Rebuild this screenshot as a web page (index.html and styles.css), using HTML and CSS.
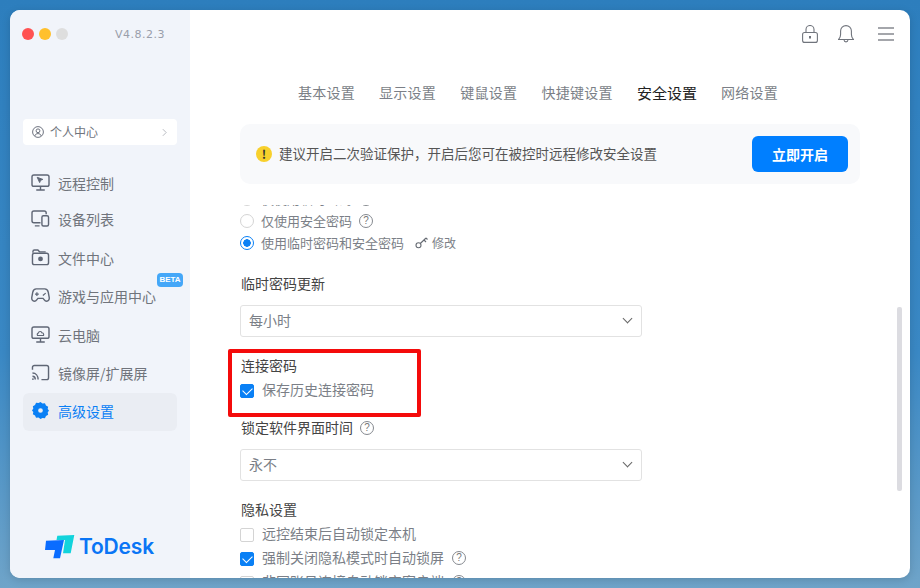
FILE: index.html
```html
<!DOCTYPE html>
<html lang="zh-CN">
<head>
    <meta charset="UTF-8">
    <meta name="viewport" content="width=device-width, initial-scale=1.0">
    <title>ToDesk 高级设置</title>
    <link rel="stylesheet" href="styles.css">
</head>
<body>
    <div class="window">
        <aside class="sidebar">
            <div class="title-row">
                <span class="light light-red"></span>
                <span class="light light-yellow"></span>
                <span class="light light-grey"></span>
                <span class="version">V4.8.2.3</span>
            </div>

            <a class="profile">
                <svg class="profile-icon" viewBox="0 0 12 12" fill="none" stroke="#6f7480" stroke-width="1">
                    <circle cx="6" cy="6" r="5.4"/>
                    <circle cx="6" cy="4.8" r="1.9"/>
                    <path d="M2.8 10c.4-1.7 1.6-2.4 3.2-2.4s2.8.7 3.2 2.4"/>
                </svg>
                <span class="profile-text">个人中心</span>
                <svg class="profile-arrow" viewBox="0 0 6 10" fill="none" stroke="#a9adb5" stroke-width="1">
                    <path d="M1 1l4 4-4 4"/>
                </svg>
            </a>

            <nav class="nav">
                <a class="nav-item">
                    <svg class="nav-icon" viewBox="0 0 20 18" fill="none" stroke="#5f6675" stroke-width="1.5">
                        <rect x="1" y="1" width="18" height="12" rx="2"/>
                        <path d="M10 13v4M5.500 17h9"/>
                        <path d="M6.500 3.500l6 2.200-2.400 1-1 2.400z" fill="#5f6675" stroke-width="1"/>
                    </svg>
                    远程控制
                </a>
                <a class="nav-item nav-item-second">
                    <svg class="nav-icon" viewBox="0 0 20 18" fill="none" stroke="#5f6675" stroke-width="1.5">
                        <path d="M10 13.500H3a2 2 0 0 1-2-2V3a2 2 0 0 1 2-2h11a2 2 0 0 1 2 2v1.500"/>
                        <rect x="11.500" y="6" width="7" height="11" rx="1.600"/>
                        <path d="M4 16.800h5"/>
                    </svg>
                    设备列表
                </a>
                <a class="nav-item">
                    <svg class="nav-icon" viewBox="0 0 20 18" fill="none" stroke="#5f6675" stroke-width="1.5">
                        <path d="M2 4V2.600C2 1.700 2.700 1 3.600 1h3.600l1.800 2h6.500"/>
                        <rect x="1.500" y="4.500" width="17" height="12" rx="2"/>
                        <circle cx="10" cy="10.500" r="1.800" fill="#5f6675"/>
                    </svg>
                    文件中心
                </a>
                <a class="nav-item nav-item-tall">
                    <svg class="nav-icon" viewBox="0 0 20 18" fill="none" stroke="#5f6675" stroke-width="1.500">
                        <path d="M5.500 2h9c2 0 3.200 1.300 3.700 3.400l1 5.600c.4 2.300-.9 4-2.700 4-1.200 0-2-.7-2.700-1.700L12.700 12H7.300l-1.100 1.300C5.500 14.300 4.700 15 3.500 15 1.700 15 .4 13.300.8 11l1-5.600C2.300 3.300 3.500 2 5.500 2z"/>
                        <path d="M6.200 5.500v4M4.200 7.500h4M12.500 9l3-2.500" stroke-width="1.300"/>
                    </svg>
                    游戏与应用中心
                    <span class="beta">BETA</span>
                </a>
                <a class="nav-item">
                    <svg class="nav-icon" viewBox="0 0 20 18" fill="none" stroke="#5f6675" stroke-width="1.5">
                        <rect x="1" y="1" width="18" height="12" rx="2"/>
                        <path d="M10 13v4M5.500 17h9"/>
                        <path d="M6.800 10h6.400c.6-1.700-.5-2.900-1.700-2.800-.3-1.900-3.500-2-3.700.2-1 0-1.600 1.300-1 2.600z" stroke-width="1.200"/>
                    </svg>
                    云电脑
                </a>
                <a class="nav-item">
                    <svg class="nav-icon" viewBox="0 0 20 18" fill="none" stroke="#5f6675" stroke-width="1.5">
                        <path d="M1.500 6V3.500a2 2 0 0 1 2-2h13a2 2 0 0 1 2 2v11a2 2 0 0 1-2 2H11"/>
                        <path d="M1.500 9.500c3.500 0 6 3 6 7M1.500 13c1.800 0 3 1.600 3 3.500"/>
                        <circle cx="2" cy="16" r="1" fill="#5f6675" stroke="none"/>
                    </svg>
                    镜像屏/扩展屏
                </a>
                <a class="nav-item nav-item-active">
                    <svg class="nav-icon" viewBox="0 0 20 18">
                        <path fill="#0a80f5" fill-rule="evenodd" d="M10 0l2.100 1.500 2.600-.2 1.100 2.400 2.300 1.200-.5 2.500L19 9l-1.400 2.100.5 2.500-2.300 1.200-1.100 2.400-2.600-.2L10 18l-2.100-1.500-2.600.2-1.100-2.400-2.300-1.200.5-2.500L1 9l1.400-2.100-.5-2.500 2.300-1.200 1.100-2.400 2.600.2zM10 6.500a2.500 2.500 0 1 0 0 5 2.500 2.500 0 0 0 0-5z"/>
                    </svg>
                    高级设置
                </a>
            </nav>

            <div class="brand">
                <svg class="brand-mark" viewBox="0 0 30 24">
                    <path fill="#12d3dc" d="M12.300 .7L29.300 0L25.700 18.300H18L20 5H11.500z"/>
                    <path fill="#0a6cff" d="M1 5.700L19 5L15 23.300H8.300L10 15H0z"/>
                </svg>
                <span class="brand-name">ToDesk</span>
            </div>
        </aside>

        <main class="main">
            <div class="topbar">
                <svg class="top-icon" viewBox="0 0 16 18" fill="none" stroke="#70747c" stroke-width="1.100">
                    <rect x=".6" y="7.500" width="14.800" height="9.900" rx="2"/>
                    <path d="M4 7.500V4.500a4 4 0 0 1 8 0v3"/>
                    <path d="M8 11v2.500" stroke-width="2"/>
                </svg>
                <svg class="top-icon" viewBox="0 0 16 18" fill="none" stroke="#70747c" stroke-width="1.100">
                    <path d="M.6 14.500h14.800c-1.500-1.400-2-2.900-2-5.200V6a5.400 5.400 0 0 0-10.800 0v3.300c0 2.300-.5 3.800-2 5.200z"/>
                    <path d="M6 14.800c.2 2.700 3.800 2.700 4 0"/>
                </svg>
                <div class="menu-icon"><span></span><span></span><span></span></div>
            </div>

            <div class="tabs">
                <a class="tab">基本设置</a>
                <a class="tab">显示设置</a>
                <a class="tab">键鼠设置</a>
                <a class="tab">快捷键设置</a>
                <a class="tab tab-active">安全设置</a>
                <a class="tab">网络设置</a>
            </div>

            <div class="banner">
                <span class="warn">!</span>
                <span class="banner-text">建议开启二次验证保护，开启后您可在被控时远程修改安全设置</span>
                <button class="banner-button">立即开启</button>
            </div>

            <div class="scroll">
                <div class="scroll-inner">
                    <div class="option">
                        <span class="radio"></span>仅使用临时密码<span class="help">?</span>
                    </div>
                    <div class="option">
                        <span class="radio"></span>仅使用安全密码<span class="help">?</span>
                    </div>
                    <div class="option">
                        <span class="radio radio-on"></span>使用临时密码和安全密码
                        <span class="edit">
                            <svg class="key-icon" viewBox="0 0 14 12" fill="none" stroke="#666b73" stroke-width="1.100">
                                <circle cx="3.500" cy="8.300" r="2.500"/>
                                <path d="M5.300 6.500L11 1M9 3l2 2M11 1l1.500 1.500"/>
                            </svg>
                            修改
                        </span>
                    </div>

                    <h3 class="label label-update">临时密码更新</h3>
                    <div class="select">每小时<span class="chevron"></span></div>

                    <div class="marked">
                        <h3 class="label label-tight">连接密码</h3>
                        <div class="option option-check">
                            <span class="check check-on"></span>保存历史连接密码
                        </div>
                        <div class="red-box"></div>
                    </div>

                    <h3 class="label label-lock">锁定软件界面时间<span class="help">?</span></h3>
                    <div class="select">永不<span class="chevron"></span></div>

                    <h3 class="label label-privacy label-tight">隐私设置</h3>
                    <div class="option option-check">
                        <span class="check"></span>远控结束后自动锁定本机
                    </div>
                    <div class="option option-check">
                        <span class="check check-on"></span>强制关闭隐私模式时自动锁屏<span class="help">?</span>
                    </div>
                    <div class="option option-check">
                        <span class="check"></span>非同账号连接自动锁定客户端<span class="help">?</span>
                    </div>
                </div>
                <div class="scrollbar"></div>
            </div>
        </main>
    </div>
</body>
</html>
```

FILE: styles.css
```css
* {
    box-sizing: border-box;
}
html, body {
    height: 100%;
}
body {
    margin: 0;
    padding: 10px;
    overflow: hidden;
    font-family: "Noto Sans CJK SC", "Noto Sans", sans-serif;
    font-size: 14px;
    color: #666;
    background: linear-gradient(180deg, #2d7ebd 0%, #3a88c4 60%, #6fa4c9 100%);
}
.window {
    display: flex;
    height: 568px;
    border-radius: 10px;
    overflow: hidden;
    background-color: #fff;
    box-shadow: 0 2px 8px rgba(0, 0, 0, 0.15);
}

/* Sidebar */
.sidebar {
    display: flex;
    flex-direction: column;
    flex: 0 0 180px;
    padding: 0 13px;
    background-color: #f1f4fa;
}
.title-row {
    display: flex;
    align-items: center;
    gap: 5px;
    height: 48px;
}
.light {
    width: 12px;
    height: 12px;
    border-radius: 50%;
}
.light-red {
    margin-left: -1px;
    background-color: #ff5252;
}
.light-yellow {
    background-color: #ffc02c;
}
.light-grey {
    background-color: #dedede;
}
.version {
    margin-left: 42px;
    font-family: "DejaVu Sans", sans-serif;
    font-size: 11px;
    letter-spacing: 0.5px;
    color: #9a9eaa;
}
.profile {
    display: flex;
    align-items: center;
    height: 26px;
    margin-top: 61px;
    padding: 0 10px 2px 9px;
    border-radius: 4px;
    background-color: #fff;
}
.profile-icon {
    width: 12px;
    height: 12px;
    margin: 2px 6px 0 0;
}
.profile-text {
    flex: 1;
    font-size: 12px;
    color: #70747c;
}
.profile-arrow {
    width: 5px;
    height: 9px;
    margin-top: 2px;
}
.nav {
    display: flex;
    flex-direction: column;
    margin-top: 20px;
}
.nav-item {
    position: relative;
    display: flex;
    align-items: center;
    height: 38px;
    padding: 0 0 2px 8px;
    border-radius: 6px;
    color: #70747c;
}
.nav-item-second {
    height: 37px;
    padding-bottom: 5px;
}
.nav-item-tall {
    height: 39px;
    padding-bottom: 3px;
}
.nav-item-active {
    background-color: #eaedf3;
    color: #0a80f5;
}
.nav-icon {
    flex: none;
    width: 19px;
    height: 17px;
    margin: 0 8px 1px 0;
}
.beta {
    position: absolute;
    top: -5px;
    right: -6px;
    width: 26px;
    border-radius: 4px;
    font-family: "Liberation Sans", sans-serif;
    font-size: 8px;
    font-weight: 700;
    line-height: 14px;
    text-align: center;
    color: #fff;
    background-color: #45a7f8;
}
.brand {
    display: flex;
    align-items: center;
    margin-top: auto;
    margin-bottom: 19px;
    padding-left: 22px;
}
.brand-mark {
    width: 30px;
    height: 24px;
    margin-right: 4px;
}
.brand-name {
    font-family: Inter, "Noto Sans", sans-serif;
    font-size: 21px;
    font-weight: 600;
    letter-spacing: -0.2px;
    color: #0a75f5;
}

/* Main column */
.main {
    display: flex;
    flex-direction: column;
    flex: 1;
    min-width: 0;
}
.topbar {
    display: flex;
    align-items: center;
    justify-content: flex-end;
    gap: 20px;
    height: 48px;
    padding-right: 16px;
}
.top-icon {
    width: 16px;
    height: 18px;
}
.menu-icon {
    display: flex;
    flex-direction: column;
    gap: 4px;
    width: 16px;
    margin-left: 4px;
}
.menu-icon span {
    height: 2px;
    background-color: #a4a6ab;
}
.tabs {
    display: flex;
    align-items: center;
    justify-content: center;
    gap: 24.2px;
    height: 22px;
    margin-top: 23px;
    padding-right: 24px;
}
.tab {
    letter-spacing: 0.25px;
    color: #7b7f87;
}
.tab-active {
    font-size: 15px;
    letter-spacing: 0;
    color: #222;
}
.banner {
    display: flex;
    align-items: center;
    height: 60px;
    margin: 21px 50px 0;
    padding: 0 12px 0 16px;
    border-radius: 10px;
    background-color: #f8f9fb;
}
.warn {
    width: 16px;
    height: 16px;
    margin-right: 7px;
    border-radius: 50%;
    font-size: 12px;
    font-weight: 700;
    line-height: 16px;
    text-align: center;
    color: #333;
    background-color: #f8d02c;
}
.banner-text {
    flex: 1;
    padding-bottom: 2px;
    font-size: 13.5px;
    color: #555;
}
.banner-button {
    width: 96px;
    height: 36px;
    border: none;
    border-radius: 6px;
    font-family: inherit;
    font-size: 14px;
    font-weight: 700;
    color: #fff;
    background-color: #007fff;
}

/* Scrolled settings list */
.scroll {
    position: relative;
    flex: 1;
    margin-top: 21px;
    overflow: hidden;
}
.scroll-inner {
    display: flex;
    flex-direction: column;
    margin-top: -17px;
    padding: 0 268px 0 50px;
}
.option {
    display: flex;
    align-items: center;
    height: 22px;
    padding-bottom: 2px;
    font-size: 13px;
    color: #7b7f87;
    white-space: nowrap;
}
.option-check {
    height: 24px;
    font-size: 14px;
}
.option-check .help {
    margin-left: 8px;
}
.radio {
    flex: none;
    width: 14px;
    height: 14px;
    margin: 2px 7px 0 0;
    border: 1px solid #d4d4d4;
    border-radius: 50%;
}
.radio-on {
    border-color: #0a80f5;
    background: radial-gradient(circle, #0a80f5 0 3.500px, #fff 4px);
}
.check {
    flex: none;
    width: 14px;
    height: 14px;
    margin: 4px 8px 0 0;
    border: 1px solid #d4d4d4;
    border-radius: 2px;
}
.check-on {
    position: relative;
    border-color: #0a80f5;
    background-color: #0a80f5;
}
.check-on::after {
    content: "";
    position: absolute;
    top: 2px;
    left: 2px;
    width: 8px;
    height: 5px;
    border-left: 1.500px solid #fff;
    border-bottom: 1.500px solid #fff;
    transform: rotate(-45deg);
}
.help {
    display: inline-block;
    flex: none;
    width: 14px;
    height: 14px;
    margin: 2px 0 0 7px;
    border: 1px solid #85898f;
    border-radius: 50%;
    font-family: "Liberation Sans", sans-serif;
    font-size: 10px;
    font-weight: 400;
    line-height: 12px;
    text-align: center;
    color: #777;
}
.edit {
    display: flex;
    align-items: center;
    margin-left: 11px;
    font-size: 12px;
}
.key-icon {
    width: 14px;
    height: 12px;
    margin: 2px 3px 0 0;
}
.label {
    display: flex;
    align-items: center;
    height: 22px;
    margin: 0;
    padding: 0 0 2px 1px;
    font-size: 14px;
    font-weight: 400;
    color: #444;
}
.label-tight {
    margin-bottom: 1px;
}
.label-update {
    margin-top: 19px;
}
.label-lock {
    margin-top: 15px;
}
.label-privacy {
    margin-top: 18px;
}
.select {
    position: relative;
    height: 32px;
    margin-top: 10px;
    padding-left: 8px;
    border: 1px solid #e2e2e2;
    border-radius: 3px;
    line-height: 28px;
    color: #7b7f87;
}
.chevron {
    position: absolute;
    top: 9px;
    right: 10px;
    width: 7px;
    height: 7px;
    border-right: 1px solid #666;
    border-bottom: 1px solid #666;
    transform: rotate(45deg);
}
.marked {
    position: relative;
    margin-top: 18px;
}
.red-box {
    position: absolute;
    top: -6px;
    left: -12px;
    width: 193px;
    height: 68px;
    border: 4px solid #f40b0b;
    border-radius: 2px;
    pointer-events: none;
}
.scrollbar {
    position: absolute;
    top: 102px;
    right: 8px;
    width: 5px;
    height: 184px;
    border-radius: 2px;
    background-color: #dcdce1;
}
```
